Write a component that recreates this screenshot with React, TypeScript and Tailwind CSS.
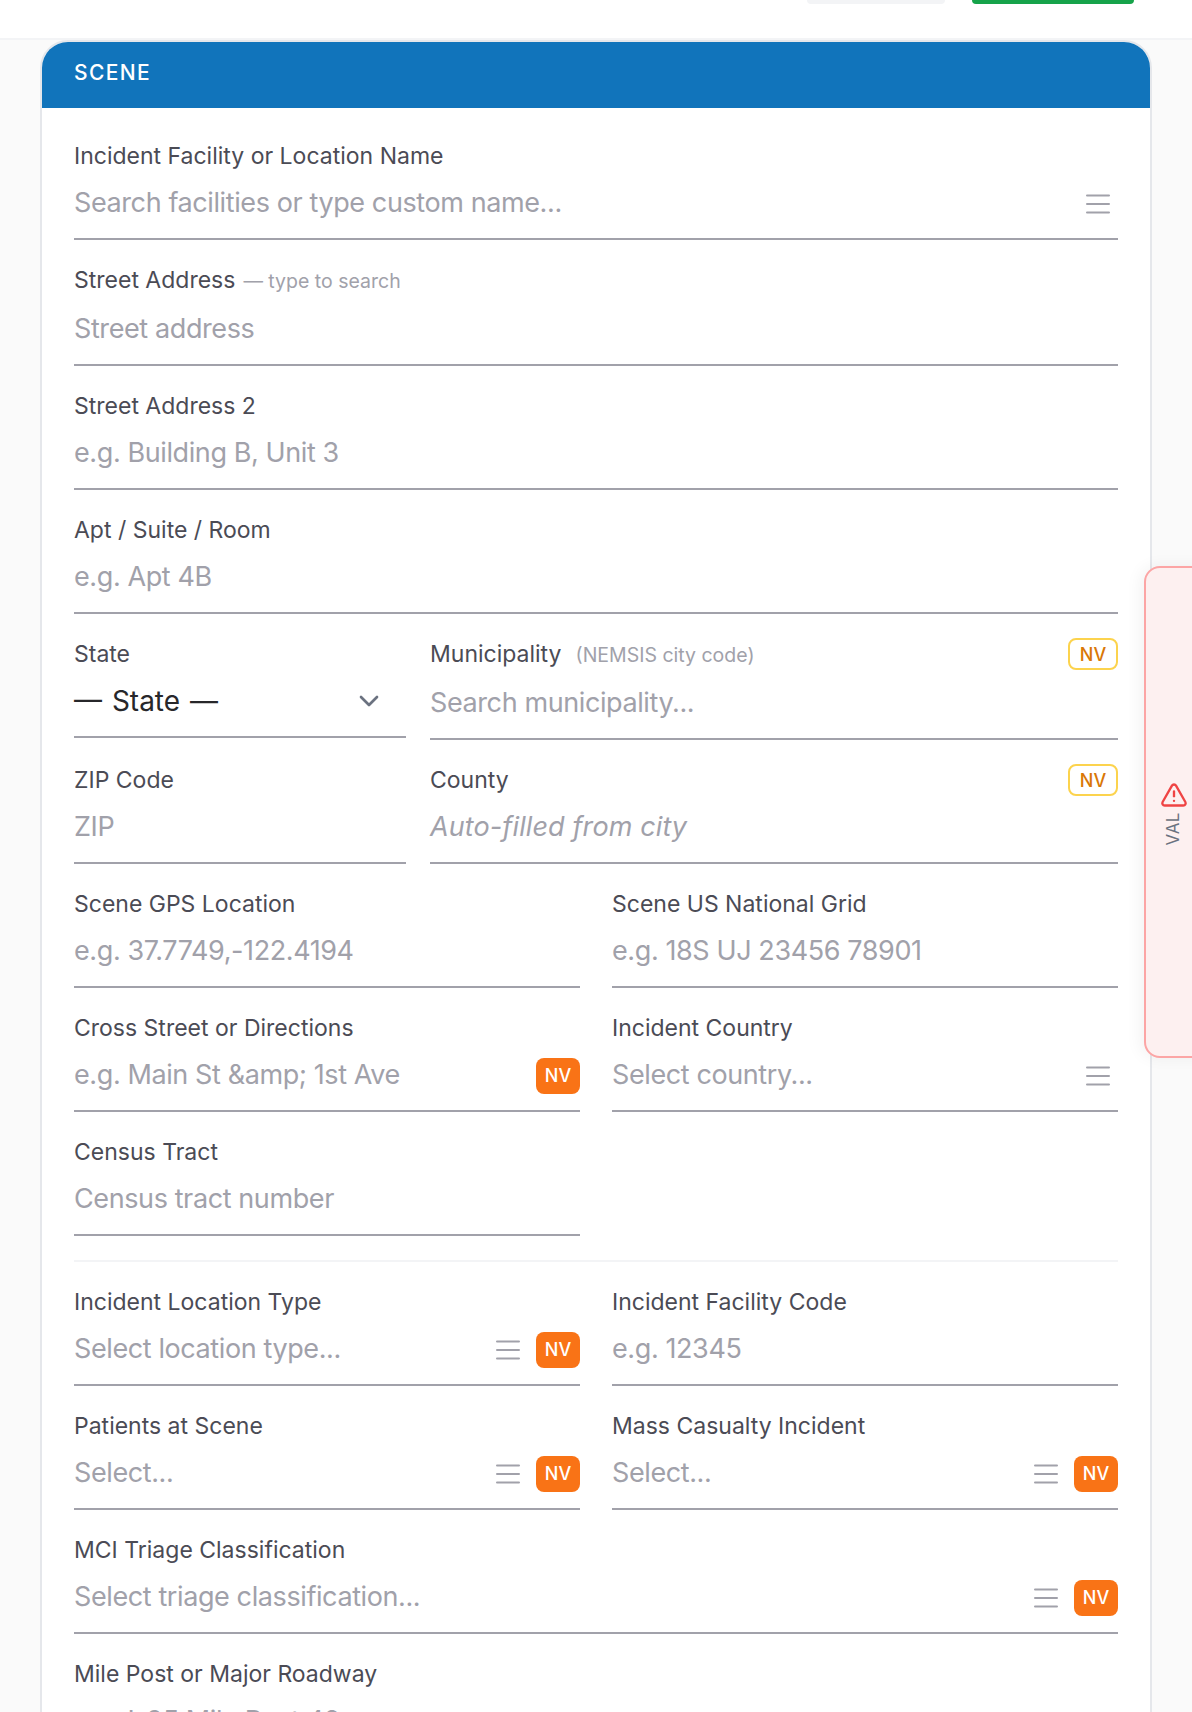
import { TriangleAlert, ChevronDown } from 'lucide-react';
import type { ReactNode } from 'react';

const font = "font-['Inter','Liberation_Sans',sans-serif]";

const MenuIcon = () => (
  <svg width="24" height="24" viewBox="0 0 24 24" className="shrink-0 text-[#a1a1aa]" fill="none" stroke="currentColor" strokeWidth="2" strokeLinecap="round">
    <path d="M1 3.5h22M1 12h22M1 20.5h22" />
  </svg>
);

const NvSolid = () => (
  <span className="flex h-9 w-11 shrink-0 items-center justify-center rounded-lg bg-[#f97316] text-[18px] font-medium text-white">NV</span>
);

const NvOutline = () => (
  <span className="ml-auto flex h-[32px] w-[50px] shrink-0 items-center justify-center rounded-lg border-2 border-[#fcd34d] text-[18px] font-medium text-[#d97706]">NV</span>
);

type FieldProps = {
  label: string;
  placeholder: string;
  note?: ReactNode;
  tall?: boolean;
  italic?: boolean;
  menu?: boolean;
  nv?: boolean;
  outlineNv?: boolean;
};

const Field = ({ label, placeholder, note, tall, italic, menu, nv, outlineNv }: FieldProps) => (
  <div className="min-w-0">
    <div className={`flex items-center text-[23px] text-[#4b4b55] ${tall ? 'h-8 pb-1' : 'h-[30px] pb-0.5'}`}>
      <span>{label}</span>
      {note}
      {outlineNv && <NvOutline />}
    </div>
    <div className="flex h-[68px] items-center border-b-2 border-[#a1a1aa] pb-[3px]">
      <span className={`flex-1 text-[27px] text-[#a1a1aa] ${italic ? 'italic tracking-[0.1px]' : 'tracking-[-0.4px]'}`}>{placeholder}</span>
      {menu && <span className={nv ? 'mr-4' : 'mr-2'}><MenuIcon /></span>}
      {nv && <NvSolid />}
    </div>
  </div>
);

const App = () => {
  return (
    <div className={`relative h-[1712px] overflow-hidden bg-[#fafafa] ${font}`}>
      <div className="flex h-[40px] items-start justify-end gap-[27px] border-b-2 border-[#f3f4f6] bg-white pr-[58px]">
        <div className="h-1 w-[138px] rounded-b-lg bg-[#f3f4f6]" />
        <div className="h-1 w-[162px] rounded-b-lg bg-[#16a34a]" />
      </div>

      <div className="mx-[40px] h-[1700px] rounded-t-[28px] border-2 border-[#e5e7eb] bg-white">
        <div className="flex h-[66px] items-center rounded-t-[26px] bg-[#1174bb] pb-1 pl-[32px] text-[21px] font-medium tracking-[1.4px] text-white">SCENE</div>

        <div className="flex flex-col gap-[26px] px-[32px] pt-[34px]">
          <Field label="Incident Facility or Location Name" placeholder="Search facilities or type custom name..." menu />
          <Field
            label="Street Address"
            placeholder="Street address"
            tall
            note={<span className="ml-2 pt-1 text-[19.5px] text-[#a1a1aa]">— type to search</span>}
          />
          <Field label="Street Address 2" placeholder="e.g. Building B, Unit 3" />
          <Field label="Apt / Suite / Room" placeholder="e.g. Apt 4B" />

          <div className="grid grid-cols-[332px_1fr] gap-x-6 gap-y-[26px]">
            <div>
              <div className="flex h-[30px] items-center pb-0.5 text-[23px] text-[#4b4b55]">State</div>
              <div className="flex h-[68px] items-center justify-between border-b-2 border-[#a1a1aa] pb-1 text-[28px] text-[#27272a]">
                <span className="[word-spacing:2px]">— State —</span>
                <ChevronDown size={32} className="mr-[21px] text-[#6b7280]" />
              </div>
            </div>
            <Field
              label="Municipality"
              placeholder="Search municipality..."
              tall
              outlineNv
              note={<span className="ml-3.5 pt-1 text-[19.5px] text-[#a1a1aa]">(NEMSIS city code)</span>}
            />
            <Field label="ZIP Code" placeholder="ZIP" />
            <Field label="County" placeholder="Auto-filled from city" italic outlineNv />
          </div>

          <div className="grid grid-cols-2 gap-x-8 gap-y-[26px]">
            <Field label="Scene GPS Location" placeholder="e.g. 37.7749,-122.4194" />
            <Field label="Scene US National Grid" placeholder="e.g. 18S UJ 23456 78901" />
            <Field label="Cross Street or Directions" placeholder={'e.g. Main St &amp; 1st Ave'} nv />
            <Field label="Incident Country" placeholder="Select country..." menu />
            <Field label="Census Tract" placeholder="Census tract number" />
          </div>

          <div className="-mt-0.5 h-0.5 bg-[#f3f4f6]" />

          <div className="grid grid-cols-2 gap-x-8 gap-y-[26px]">
            <Field label="Incident Location Type" placeholder="Select location type..." menu nv />
            <Field label="Incident Facility Code" placeholder="e.g. 12345" />
            <Field label="Patients at Scene" placeholder="Select..." menu nv />
            <Field label="Mass Casualty Incident" placeholder="Select..." menu nv />
          </div>

          <Field label="MCI Triage Classification" placeholder="Select triage classification..." menu nv />
          <Field label="Mile Post or Major Roadway" placeholder="e.g. I-95 Mile Post 42" />
        </div>
      </div>

      <div className="absolute left-[1144px] right-[-20px] top-[566px] flex h-[492px] flex-col items-center justify-center rounded-l-2xl border-2 border-[#fca5a5] bg-[#fdf0f0] pr-[8px] pt-[3px] shadow-[-4px_0_16px_rgba(0,0,0,0.05)]">
        <TriangleAlert size={28} className="text-[#ef4444]" />
        <span className="mt-[3px] rotate-180 text-[17px] tracking-[0.5px] text-[#6b7280] [writing-mode:vertical-rl]">VAL</span>
      </div>
    </div>
  );
};

export default App;
